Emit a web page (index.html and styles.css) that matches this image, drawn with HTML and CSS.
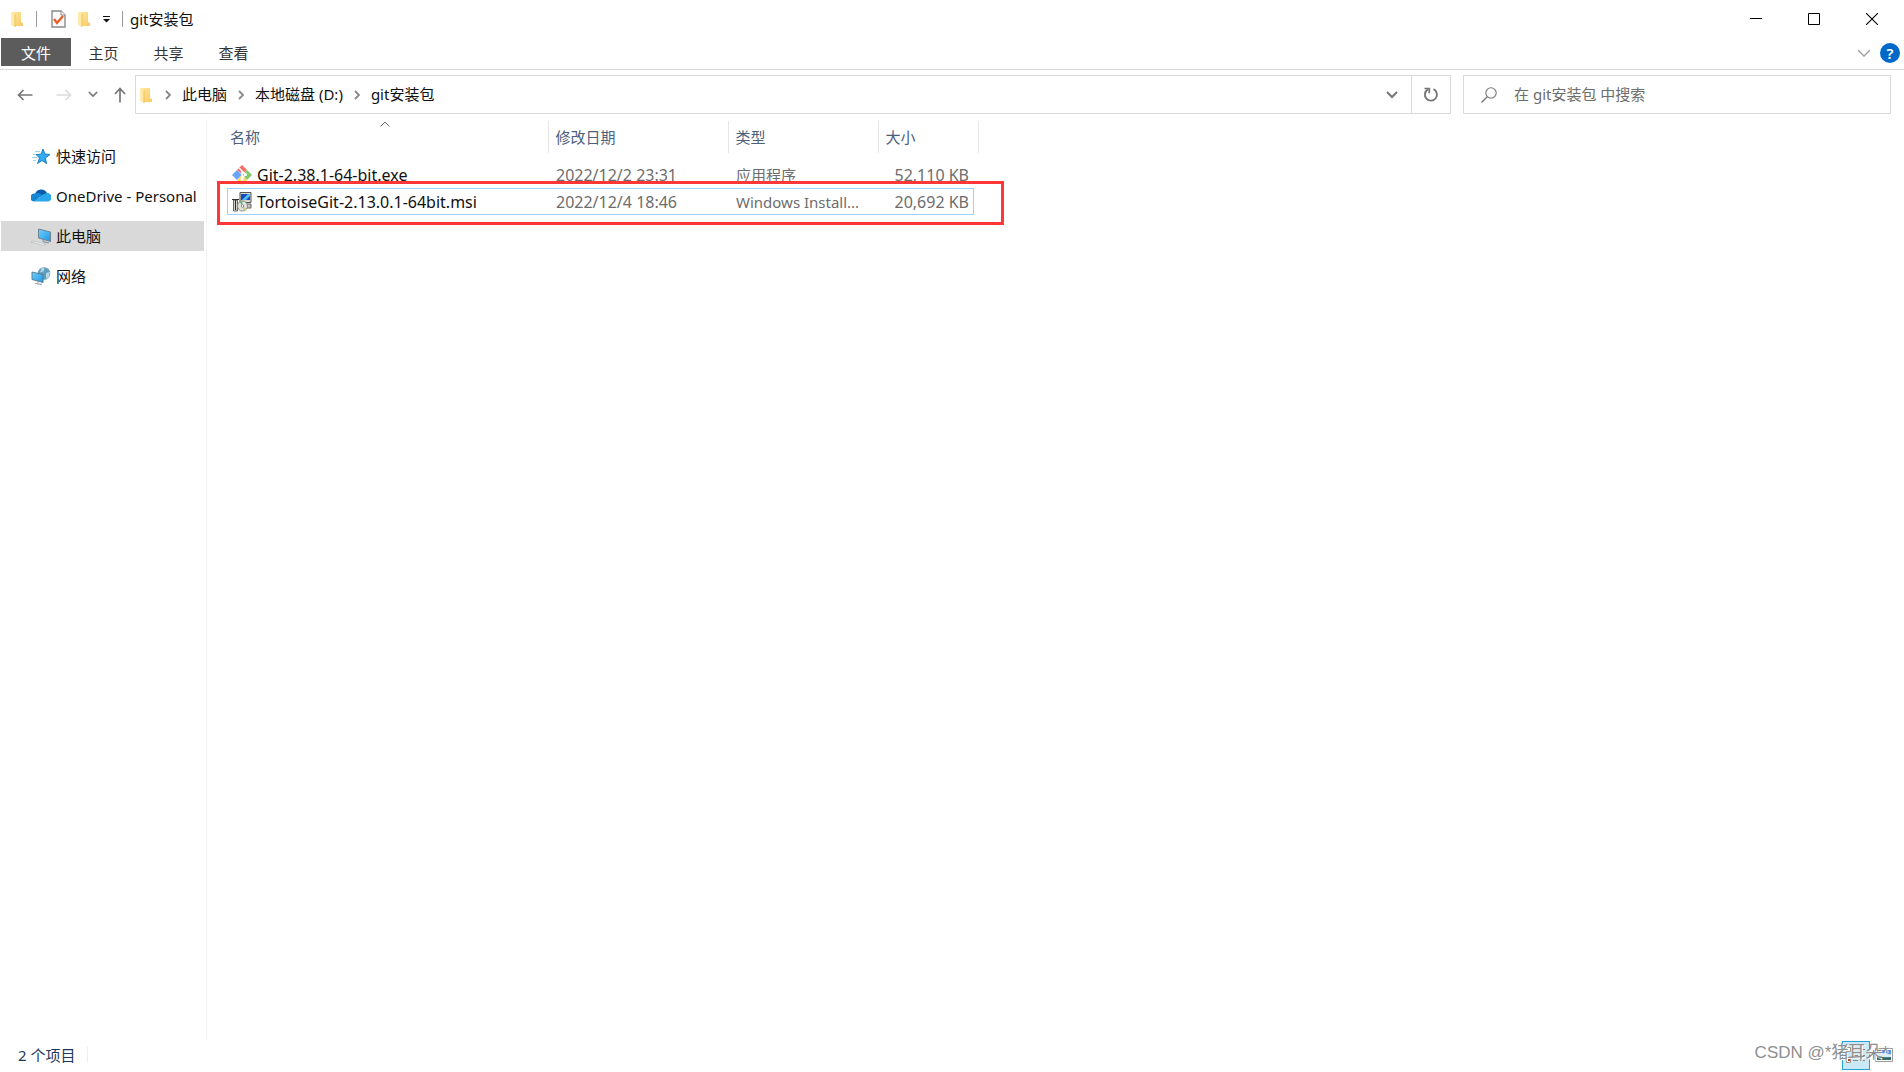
FILE: index.html
```html
<!DOCTYPE html>
<html lang="zh-CN">
<head>
<meta charset="utf-8">
<title>git安装包</title>
<link rel="stylesheet" href="styles.css">
</head>
<body>
<svg class="defs" aria-hidden="true">
  <defs>
    <linearGradient id="fold" x1="0" x2="1" y1="0" y2="1"><stop offset="0" stop-color="#ffe69f"/><stop offset="1" stop-color="#f8cc62"/></linearGradient>
    <linearGradient id="screen" x1="0" x2="1" y1="0" y2="1"><stop offset="0" stop-color="#6fd0fb"/><stop offset="1" stop-color="#2196e8"/></linearGradient>
    <symbol id="folder" viewBox="0 0 13 16">
      <path d="M2 1h8v10l2 1v3H3L1 14V1z" fill="url(#fold)"/>
      <path d="M0 1l4 2v13l-4-2z" fill="#ffe9ab"/>
      <path d="M4 3v13" stroke="#eec25a" stroke-width="1"/>
    </symbol>
    <symbol id="chev-right" viewBox="0 0 6 10"><path d="M1 1l4 4-4 4" fill="none" stroke="#888" stroke-width="1.800"/></symbol>
    <symbol id="chev-down" viewBox="0 0 12 8"><path d="M1 1l5 5 5-5" fill="none" stroke="currentColor" stroke-width="2"/></symbol>
  </defs>
</svg>
<div class="window">
  <header class="titlebar">
    <svg class="folder"><use href="#folder"/></svg>
    <span class="divider divider-wide"></span>
    <button class="quick" aria-label="属性">
      <svg width="15" height="18" viewBox="0 0 15 18"><path d="M1 1h9l4 4v12H1z" fill="#fafafa" stroke="#8b8b8b" stroke-width="1.4"/><path d="M10 1v4h4" fill="#fff" stroke="#8b8b8b"/><path d="M3 9l3 4 6-7" fill="none" stroke="#f05a22" stroke-width="2.2"/></svg>
    </button>
    <button class="quick" aria-label="新建文件夹"><svg class="folder"><use href="#folder"/></svg></button>
    <button class="quick" aria-label="自定义快速访问工具栏"><svg width="7" height="8" viewBox="0 0 7 8"><path d="M0 1.500h7" stroke="#111"/><path d="M0 4h7L3.500 7.500z" fill="#111"/></svg></button>
    <span class="divider"></span>
    <h1 class="title">git安装包</h1>
    <div class="controls">
      <button aria-label="最小化"><svg width="12" height="12"><path d="M0 5.500h12" stroke="#000"/></svg></button>
      <button aria-label="最大化"><svg width="12" height="12"><path d="M.5.500h11v11H.5z" fill="none" stroke="#000"/></svg></button>
      <button aria-label="关闭"><svg width="12" height="12"><path d="M0 0l12 12M12 0L0 12" stroke="#000" stroke-width="1.100"/></svg></button>
    </div>
  </header>

  <div class="ribbon">
    <button class="tab tab-file">文件</button>
    <button class="tab">主页</button>
    <button class="tab">共享</button>
    <button class="tab">查看</button>
    <div class="ribbon-end">
      <button class="expand" aria-label="展开功能区"><svg width="12" height="8" viewBox="0 0 12 8"><path d="M0 1l6 6 6-6" fill="none" stroke="#a0a0a0" stroke-width="1.300"/></svg></button>
      <button class="help" aria-label="帮助">?</button>
    </div>
  </div>

  <div class="navbar">
    <div class="history">
      <button aria-label="返回"><svg width="16" height="12" viewBox="0 0 16 12"><path d="M15.500 6H1.500M6.500 1l-5 5 5 5" fill="none" stroke="#777" stroke-width="1.700"/></svg></button>
      <button aria-label="前进"><svg width="16" height="12" viewBox="0 0 16 12"><path d="M.5 6h14M9.500 1l5 5-5 5" fill="none" stroke="#dcdcdc" stroke-width="1.700"/></svg></button>
      <button class="recent" aria-label="最近浏览的位置"><svg width="10" height="7"><use href="#chev-down"/></svg></button>
      <button class="up" aria-label="上移"><svg width="12" height="16" viewBox="0 0 12 16"><path d="M6 15.500V1.500M1 7l5-5.500L11 7" fill="none" stroke="#777" stroke-width="1.700"/></svg></button>
    </div>
    <div class="address">
      <svg class="folder"><use href="#folder"/></svg>
      <nav class="crumbs" aria-label="地址">
        <svg class="sep"><use href="#chev-right"/></svg><a href="#pc">此电脑</a>
        <svg class="sep"><use href="#chev-right"/></svg><a href="#d">本地磁盘 (D:)</a>
        <svg class="sep"><use href="#chev-right"/></svg><a href="#git">git安装包</a>
      </nav>
      <button class="drop" aria-label="以前的位置"><svg width="12" height="8"><use href="#chev-down"/></svg></button>
      <button class="refresh" aria-label="刷新"><svg width="16" height="16" viewBox="0 0 16 16"><path d="M10.500 2.200a6 6 0 1 1-5.500.2" fill="none" stroke="#777" stroke-width="1.900"/><path d="M1.500 1.500h4.800v4.800" fill="none" stroke="#777" stroke-width="1.700"/></svg></button>
    </div>
    <label class="search">
      <svg width="16" height="16" viewBox="0 0 16 16"><circle cx="10" cy="6" r="5.200" fill="none" stroke="#777" stroke-width="1.100"/><path d="M6.300 9.700L.5 15.500" stroke="#777" stroke-width="1.300"/></svg>
      <input type="search" aria-label="搜索" placeholder="在 git安装包 中搜索">
    </label>
  </div>

  <div class="body">
    <nav class="sidebar" aria-label="导航窗格">
      <a href="#quick"><svg width="20" height="20" viewBox="0 0 20 20"><path d="M12 3l2 5 5 .5-4.500 3.500 1 5.500-4.500-3-4.500 3 2-5.500-3.500-3.500 5-.3z" fill="#35a9ee" stroke="#1479bd" stroke-width=".9"/><path d="M4 5.500h5M2 8.500h3M1 11.500h5M2 14.500h3" stroke="#9ed2ee"/></svg>快速访问</a>
      <a href="#onedrive"><svg width="20" height="20" viewBox="0 0 20 20"><path d="M4 8a6.500 6.500 0 0 1 12-1l-3 6z" fill="#0a5cab"/><path d="M4 7.500c3-1 5 0 7 1.500l-7 6.500H3a4 4 0 0 1 1-8z" fill="#1686d4"/><path d="M11 9l4.500-2a4.300 4.300 0 0 1 1.500 8.500H4z" fill="#28a8ea"/></svg>OneDrive - Personal</a>
      <a href="#pc" class="current"><svg width="20" height="20" viewBox="0 0 20 20"><path d="M7.500 3l12 3v9.500L7.500 12z" fill="url(#screen)" stroke="#697d89" stroke-width=".9"/><path d="M12 14v1.500l6 1.500" stroke="#7d8c96" fill="none"/><path d="M0 16l2-1 13 3-3 1.200z" fill="#f4f4f4" stroke="#a9b0b5" stroke-width=".6"/></svg>此电脑</a>
      <a href="#network"><svg width="20" height="20" viewBox="0 0 20 20"><circle cx="13" cy="7.500" r="6.300" fill="#5d9dbf"/><path d="M11 1.500c3 0 3 3 1 4L9 6.500zM15 7l4-1-1 5-3 2z" fill="#b8d7e2"/><path d="M1 6l11 2.500v8L1 13.500z" fill="url(#screen)" stroke="#587687" stroke-width=".9"/><path d="M7 15.500v2M4 17.500l7 1" stroke="#8b9aa3"/></svg>网络</a>
    </nav>
    <main class="files">
      <div class="listing">
        <table>
          <colgroup><col class="c-name"><col class="c-date"><col class="c-type"><col class="c-size"></colgroup>
          <thead>
            <tr>
              <th scope="col" aria-sort="ascending"><button>名称</button><svg class="sort" width="10" height="6" viewBox="0 0 10 6"><path d="M.5 5.500L5 1l4.500 4.500" fill="none" stroke="#666"/></svg></th>
              <th scope="col"><button>修改日期</button></th>
              <th scope="col"><button>类型</button></th>
              <th scope="col"><button>大小</button></th>
            </tr>
          </thead>
          <tbody>
            <tr>
              <td><span class="name"><svg width="20" height="20" viewBox="0 0 20 20"><path d="M10 0l5 5-5 4-5-4z" fill="#f56b67"/><path d="M5 5l5 5-5 5-5-5z" fill="#67a5fa"/><path d="M15 5l5 5-5 5-5-5z" fill="#80ca6b"/><path d="M10 10l5 5-5 5-5-5z" fill="#fbd75a"/><path d="M7 3l6 6-3 6M10 6v9" fill="none" stroke="#fff" stroke-width="1.500"/><circle cx="10" cy="14" r="1.600" fill="#fff"/><circle cx="13.500" cy="9.500" r="1.500" fill="#fff"/></svg>Git-2.38.1-64-bit.exe</span></td>
              <td class="date">2022/12/2 23:31</td><td>应用程序</td><td class="size">52,110 KB</td>
            </tr>
            <tr class="focused">
              <td><span class="name"><svg width="20" height="20" viewBox="0 0 20 20"><path d="M8 .5h11v10H8z" fill="#d8d5c9" stroke="#555"/><path d="M9 2h9v6H9z" fill="#1549c4"/><path d="M10 8l6-6h2v2l-4 4z" fill="#50bdf2"/><path d="M10 12h9v4h-9z" fill="#c9c7bd" stroke="#666"/><path d="M1.500 8h4v11h-4z" fill="#d4d1c6" stroke="#666"/><path d="M0 7.500h7M3.500 8v10" stroke="#333"/><circle cx="10.500" cy="14" r="5" fill="#e2e4df" stroke="#888"/><path d="M10.500 14l-3-4a5 5 0 0 1 3-1z" fill="#73b87c"/><path d="M10.500 14l4 3a5 5 0 0 1-3 2z" fill="#d6ca68"/><circle cx="10.500" cy="14" r="1.300" fill="#fff" stroke="#888"/></svg>TortoiseGit-2.13.0.1-64bit.msi</span></td>
              <td class="date">2022/12/4 18:46</td><td>Windows Install...</td><td class="size">20,692 KB</td>
            </tr>
          </tbody>
        </table>
        <div class="marker"></div>
      </div>
    </main>
  </div>

  <footer class="status">
    <span class="count">2 个项目</span>
    <span class="divider divider-light"></span>
    <div class="views">
      <button class="view view-on" aria-label="详细信息"><svg width="20" height="18" viewBox="0 0 20 18"><path d="M.5 1.500h4v4h-4zM.5 11.500h4v5h-4z" fill="#fff" stroke="#a29485"/><path d="M2 13h2v2H2z" fill="#c23a24"/><path d="M7 3.500h5M14 3.500h5M7 9.500h5M14 9.500h5M7 14.500h5M14 14.500h5" stroke="#888"/></svg></button>
      <button class="view" aria-label="大图标"><svg width="18" height="14" viewBox="0 0 18 14"><path d="M.5.500h17v13H.5z" fill="#fff" stroke="#999"/><path d="M2 2h14v10H2z" fill="#4f92e0"/><path d="M2 5c3-2 4 1 7 0s4 2 7 1v3H2z" fill="#dcecf8"/><path d="M2 8c4 0 8 3 14 1v3H2z" fill="#376c5c"/></svg></button>
      <span class="watermark">CSDN @*猪耳朵*</span>
    </div>
  </footer>
</div>
</body>
</html>
```
FILE: styles.css
```css
* { box-sizing: border-box; }

body {
  margin: 0;
  background: #fff;
  color: #111;
  font: 15px/20px "Noto Sans", "Noto Sans CJK SC", sans-serif;
}

button, input {
  font: inherit;
  color: inherit;
  background: none;
  border: 0;
  padding: 0;
  margin: 0;
}

a { color: inherit; text-decoration: none; }
svg { display: block; flex: none; }
.defs { position: absolute; width: 0; height: 0; }

.window {
  display: flex;
  flex-direction: column;
  min-height: 100vh;
}

.folder { width: 13px; height: 16px; }
.divider { width: 1px; height: 16px; background: #999; }
.divider-wide { margin-right: 2px; }
.divider-light { background: #eee; }

/* Title bar */
.titlebar {
  display: flex;
  align-items: center;
  gap: 12px;
  height: 38px;
  padding: 0 3px 0 11px;
}
.title { margin: 0 0 0 -5px; font-size: 15px; line-height: 20px; font-weight: 400; }
.controls { display: flex; align-self: stretch; margin-left: auto; }
.controls button { display: grid; place-items: center; width: 58px; }

/* Ribbon */
.ribbon {
  display: flex;
  height: 32px;
  padding: 0 4px 3px 1px;
  border-bottom: 1px solid #d9dadb;
}
.tab { width: 65px; padding-top: 2px; color: #333; }
.tab-file { width: 70px; background: #5c5c5c; color: #fff; }
.ribbon-end { display: flex; align-items: center; gap: 10px; margin-left: auto; padding-top: 2px; }
.help {
  width: 20px;
  height: 20px;
  border-radius: 50%;
  background: #0068c8;
  color: #fff;
  font-weight: 600;
}

/* Navigation bar */
.navbar {
  display: flex;
  gap: 12px;
  height: 49px;
  padding: 5px 13px 5px 17px;
}
.history { display: flex; align-items: center; gap: 16px; width: 106px; color: #777; }
.history button:nth-child(2) { margin-left: 7px; }
.address {
  display: flex;
  align-items: center;
  flex: 1;
  padding-left: 4px;
  border: 1px solid #d9d9d9;
}
.crumbs { display: flex; align-items: center; gap: 11px; flex: 1; padding-left: 12px; }
.crumbs a { padding-bottom: 2px; }
.sep { width: 6px; height: 10px; }
.drop, .refresh { display: grid; place-items: center; align-self: stretch; width: 38px; color: #777; }
.refresh { width: 39px; border-left: 1px solid #d9d9d9; }
.search {
  display: flex;
  align-items: center;
  gap: 17px;
  flex: 0 1 428px;
  padding: 0 17px;
  border: 1px solid #d9d9d9;
}
.search input { flex: 1; min-width: 0; padding-bottom: 2px; outline: 0; appearance: none; }
.search input::placeholder { color: #6d6d6d; opacity: 1; }
.history, .address, .search { height: 39px; }

/* Body */
.body { display: flex; flex: 1; }
.sidebar {
  display: flex;
  flex-direction: column;
  gap: 10px;
  width: 207px;
  padding: 22px 2px 0 1px;
  border-right: 1px solid #f3f3f3;
}
.sidebar a {
  display: flex;
  align-items: center;
  gap: 5px;
  height: 30px;
  padding: 0 0 1px 30px;
  white-space: nowrap;
}
.sidebar .current { background: #d9d9d9; }

.files { flex: 1; padding: 2px 0 0 20px; }
.listing { position: relative; width: 752px; }
table { width: 751px; table-layout: fixed; border-collapse: collapse; }
.c-name { width: 321px; }
.c-date { width: 180px; }
.c-type { width: 150px; }
.c-size { width: 100px; }
th {
  position: relative;
  height: 32px;
  padding: 0 0 0 7px;
  border-right: 1px solid #e5e5e5;
  color: #4c607a;
  font-weight: 400;
  text-align: left;
}
th:first-child { padding-left: 3px; }
.sort { position: absolute; left: 50%; top: 0; margin-left: -7px; }
tbody::before { content: ""; display: block; height: 8px; }
td { position: relative; height: 27px; padding: 0 0 0 8px; color: #6d6d6d; }
td:first-child { padding-left: 5px; color: #111; }
.date, .size, .name { font-size: 16px; }
.size { padding-right: 9px; text-align: right; }
.name { display: flex; align-items: center; gap: 5px; }
.focused { position: relative; }
.focused::after {
  content: "";
  position: absolute;
  inset: 0 4px 0 0;
  border: 1px solid #99d1ff;
}
.marker {
  position: absolute;
  top: 60px;
  left: -10px;
  right: -25px;
  height: 44px;
  border: 3px solid #ff3737;
}

/* Status bar */
.status {
  display: flex;
  align-items: center;
  gap: 12px;
  height: 32px;
  padding: 0 11px 2px 18px;
  color: #1e395b;
}
.views { position: relative; display: flex; align-items: center; gap: 5px; margin-left: auto; }
.view { display: grid; place-items: center; }
.view-on { width: 28px; height: 29px; border: 1px solid #26a0da; background: #cbe8f6; }
.watermark {
  position: absolute;
  right: 4px;
  top: 2px;
  color: #8f8f8f;
  font: 17px/20px "Liberation Sans", "Noto Sans CJK SC", sans-serif;
  text-shadow: 1px 1px 0 #fff;
  white-space: nowrap;
}
```
